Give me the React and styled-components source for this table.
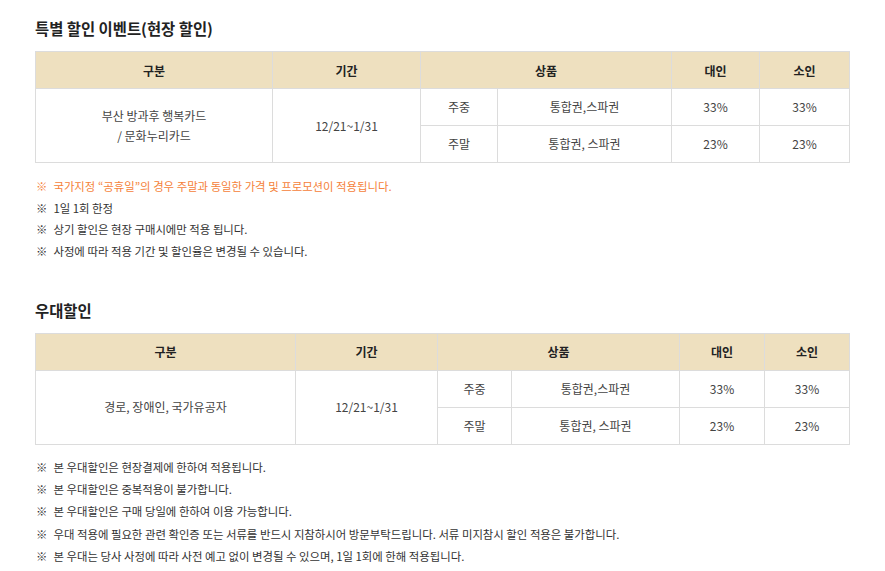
import React from 'react';
import styled, { createGlobalStyle } from 'styled-components';

const GlobalStyle = createGlobalStyle`
  body {
    margin: 0;
    background: #fff;
    font-family: "Noto Sans CJK KR", "Noto Sans", sans-serif;
    color: #333;
  }
`;

const Page = styled.div`
  padding: 16px 36px 0 35px;
`;

const Section = styled.section`
  margin-bottom: 35px;
`;

const Title = styled.h3`
  margin: 0 0 11px 0;
  font-size: 15.4px;
  line-height: 24px;
  font-weight: 700;
  color: #222;
`;

const Table = styled.table`
  width: 814px;
  border-collapse: collapse;
  table-layout: fixed;
  font-size: 12px;
  border: 1px solid #dcdcdc;
`;

const Th = styled.th`
  height: 36px;
  padding: 0;
  background: #eee0bf;
  border: 1px solid #dcdcdc;
  font-weight: 700;
  color: #222;
  text-align: center;
`;

const Td = styled.td`
  height: 36px;
  padding: 0;
  border: 1px solid #dcdcdc;
  color: #444;
  text-align: center;
  line-height: 20px;
`;

const Notes = styled.ul`
  list-style: none;
  margin: ${p => (p.$tight ? '11px' : '13px')} 0 0 0;
  padding: 0;
`;

const Note = styled.li`
  font-size: 11.4px;
  line-height: ${p => (p.$wide ? '22.3px' : '21.7px')};
  color: ${p => (p.$accent ? '#f5823a' : '#333')};
  &::before {
    content: '※';
    margin-right: 6px;
    margin-left: 1px;
  }
`;

const DiscountTable = ({ cols, target, rows }) => (
  <Table>
    <colgroup>
      {cols.map((w, i) => <col key={i} style={{ width: w }} />)}
    </colgroup>
    <thead>
      <tr>
        <Th>구분</Th>
        <Th>기간</Th>
        <Th colSpan={2}>상품</Th>
        <Th>대인</Th>
        <Th>소인</Th>
      </tr>
    </thead>
    <tbody>
      {rows.map((r, i) => (
        <tr key={i}>
          {i === 0 && <Td rowSpan={rows.length}>{target}</Td>}
          {i === 0 && <Td rowSpan={rows.length}>12/21~1/31</Td>}
          <Td>{r.day}</Td>
          <Td>{r.product}</Td>
          <Td>{r.adult}</Td>
          <Td>{r.child}</Td>
        </tr>
      ))}
    </tbody>
  </Table>
);

const rows = [
  { day: '주중', product: '통합권,스파권', adult: '33%', child: '33%' },
  { day: '주말', product: '통합권, 스파권', adult: '23%', child: '23%' },
];

export default function App() {
  return (
    <>
      <GlobalStyle />
      <Page>
        <Section>
          <Title>특별 할인 이벤트(현장 할인)</Title>
          <DiscountTable
            cols={[237, 148, 77, 174, 88, 90]}
            target={<>부산 방과후 행복카드<br />/ 문화누리카드</>}
            rows={rows}
          />
          <Notes>
            <Note $accent>국가지정 “공휴일”의 경우 주말과 동일한 가격 및 프로모션이 적용됩니다.</Note>
            <Note>1일 1회 한정</Note>
            <Note>상기 할인은 현장 구매시에만 적용 됩니다.</Note>
            <Note>사정에 따라 적용 기간 및 할인율은 변경될 수 있습니다.</Note>
          </Notes>
        </Section>
        <Section>
          <Title>우대할인</Title>
          <DiscountTable
            cols={[260, 142, 74, 168, 85, 85]}
            target="경로, 장애인, 국가유공자"
            rows={rows}
          />
          <Notes $tight>
            <Note $wide>본 우대할인은 현장결제에 한하여 적용됩니다.</Note>
            <Note $wide>본 우대할인은 중복적용이 불가합니다.</Note>
            <Note $wide>본 우대할인은 구매 당일에 한하여 이용 가능합니다.</Note>
            <Note $wide>우대 적용에 필요한 관련 확인증 또는 서류를 반드시 지참하시어 방문부탁드립니다. 서류 미지참시 할인 적용은 불가합니다.</Note>
            <Note $wide>본 우대는 당사 사정에 따라 사전 예고 없이 변경될 수 있으며, 1일 1회에 한해 적용됩니다.</Note>
          </Notes>
        </Section>
      </Page>
    </>
  );
}
